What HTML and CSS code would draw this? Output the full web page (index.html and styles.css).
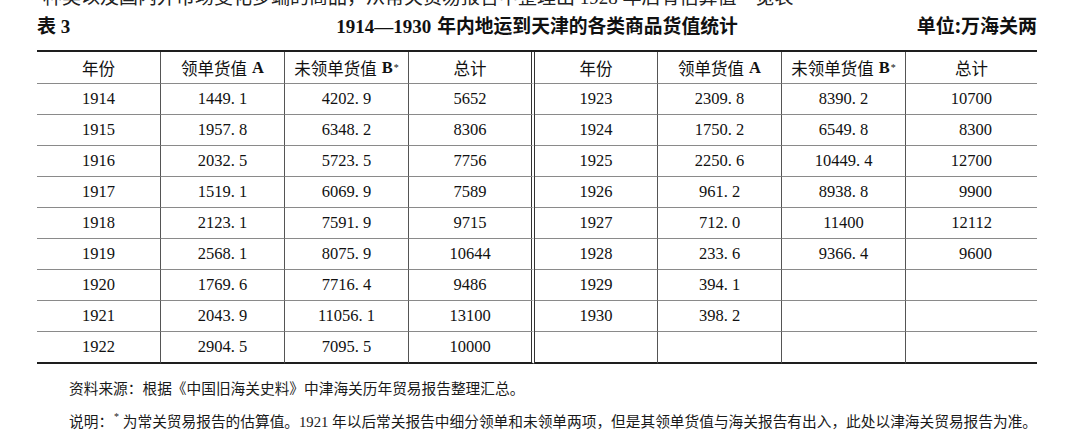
FILE: index.html
```html
<!DOCTYPE html>
<html lang="zh">
<head>
<meta charset="utf-8">
<title>表3 1914—1930年内地运到天津的各类商品货值统计</title>
<link rel="stylesheet" href="styles.css">
</head>
<body>
<div class="page">
  <div class="cut"><span>种类以及国内外市场变化多端的商品，从常关贸易报告中整理出 1928 年后有估算值一览表</span></div>
  <div class="caption">
    <div class="cap-left"><span class="hei">表</span> <span class="num">3</span></div>
    <div class="cap-title"><span class="num">1914—1930</span><span class="hei gap">年内地运到天津的各类商品货值统计</span></div>
    <div class="cap-unit"><span class="hei">单位:万海关两</span></div>
  </div>
  <div class="grid">
    <div>年份</div><div>领单货值<span class="lat">A</span></div><div>未领单货值<span class="lat">B</span><sup class="ast">*</sup></div><div>总计</div>
    <div>年份</div><div>领单货值<span class="lat">A</span></div><div>未领单货值<span class="lat">B</span><sup class="ast">*</sup></div><div>总计</div>

    <div>1914</div><div>1449. 1</div><div>4202. 9</div><div>5652</div>
    <div>1923</div><div>2309. 8</div><div>8390. 2</div><div>10700</div>

    <div>1915</div><div>1957. 8</div><div>6348. 2</div><div>8306</div>
    <div>1924</div><div>1750. 2</div><div>6549. 8</div><div>8300</div>

    <div>1916</div><div>2032. 5</div><div>5723. 5</div><div>7756</div>
    <div>1925</div><div>2250. 6</div><div>10449. 4</div><div>12700</div>

    <div>1917</div><div>1519. 1</div><div>6069. 9</div><div>7589</div>
    <div>1926</div><div>961. 2</div><div>8938. 8</div><div>9900</div>

    <div>1918</div><div>2123. 1</div><div>7591. 9</div><div>9715</div>
    <div>1927</div><div>712. 0</div><div>11400</div><div>12112</div>

    <div>1919</div><div>2568. 1</div><div>8075. 9</div><div>10644</div>
    <div>1928</div><div>233. 6</div><div>9366. 4</div><div>9600</div>

    <div>1920</div><div>1769. 6</div><div>7716. 4</div><div>9486</div>
    <div>1929</div><div>394. 1</div><div></div><div></div>

    <div>1921</div><div>2043. 9</div><div>11056. 1</div><div>13100</div>
    <div>1930</div><div>398. 2</div><div></div><div></div>

    <div>1922</div><div>2904. 5</div><div>7095. 5</div><div>10000</div>
    <div></div><div></div><div></div><div></div>
  </div>
  <p class="note first">资料来源：根据《中国旧海关史料》中津海关历年贸易报告整理汇总。</p>
  <p class="note">说明：<sup class="ast">*</sup> 为常关贸易报告的估算值。1921 年以后常关报告中细分领单和未领单两项，但是其领单货值与海关报告有出入，此处以津海关贸易报告为准。</p>
</div>
</body>
</html>
```

FILE: styles.css
```css
html, body {
  margin: 0;
  padding: 0;
  background: #ffffff;
}

body {
  color: #111111;
  font-family: "Liberation Serif", "Noto Sans CJK SC", serif;
}

.page {
  width: 1000px;
  padding-left: 37px;
}

/* partially visible line of running text above the table */
.cut {
  height: 7px;
  overflow: hidden;
  display: flex;
  align-items: flex-end;
  padding-left: 6px;
  font-size: 19px;
  line-height: 19px;
  white-space: nowrap;
  color: #222222;
}

.caption {
  display: grid;
  grid-template-columns: 1fr auto 1fr;
  align-items: center;
  height: 23px;
  padding-top: 6px;
  margin-bottom: 14px;
  font-size: 19px;
  line-height: 23px;
  white-space: nowrap;
  color: #111111;
}

.hei {
  font-family: "Noto Sans CJK SC", sans-serif;
  font-weight: 700;
}

.hei.gap {
  margin-left: 6px;
  font-size: 18.8px;
}

.num {
  font-family: "Liberation Serif", serif;
  font-weight: 700;
}

.cap-unit {
  text-align: right;
}

.grid {
  display: grid;
  grid-template-columns: 124px 124px 124px 126px 123px 124px 124px 131px;
  grid-template-rows: 32px repeat(8, 31px) 32px;
  border-top: 2px solid #1e1e1e;
}

.grid > div {
  box-sizing: border-box;
  display: flex;
  align-items: center;
  justify-content: center;
  border-bottom: 1px solid #8a8a8a;
  border-right: 1px solid #555555;
  font-size: 16.5px;
  font-weight: 400;
  white-space: nowrap;
  color: #111111;
}

.grid > div:nth-child(8n+4) {
  border-right: 4px double #333333;
}

.grid > div:nth-child(8n) {
  border-right: none;
}

.grid > div:nth-child(8n):nth-child(n+9) {
  justify-content: flex-end;
  padding-right: 45px;
}

.grid > div:nth-last-child(-n+8) {
  border-bottom: 2px solid #1e1e1e;
}

.lat {
  font-family: "Liberation Serif", serif;
  font-weight: 700;
  margin-left: 5px;
}

.ast {
  font-family: "Liberation Serif", serif;
  font-size: 10px;
  line-height: 0;
  vertical-align: 7px;
  margin-left: 1px;
}

.note {
  margin: 0;
  padding-left: 32px;
  font-size: 14.7px;
  line-height: 33px;
  white-space: nowrap;
  color: #1a1a1a;
}

.note.first {
  margin-top: 9px;
}
```
